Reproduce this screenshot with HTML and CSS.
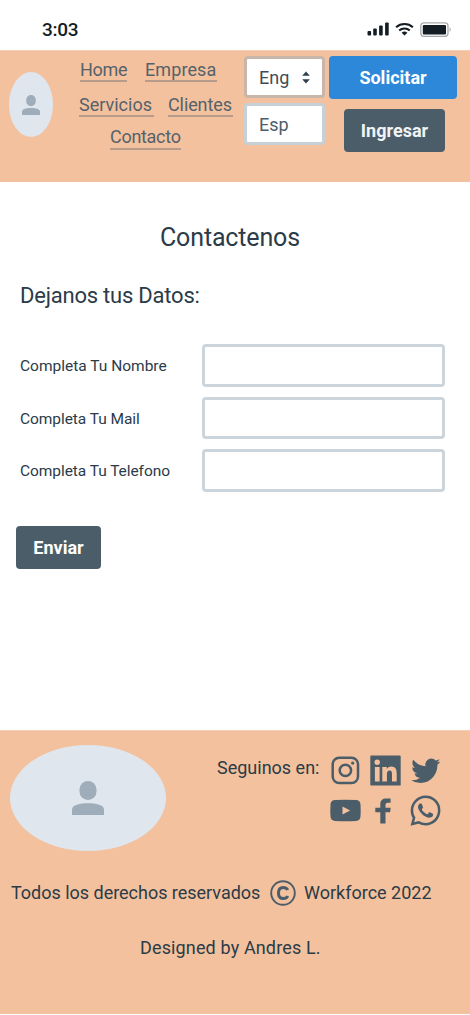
FILE: index.html
```html
<!DOCTYPE html>
<html lang="es">
<head>
<meta charset="utf-8">
<title>Contactenos</title>
<link rel="stylesheet" href="styles.css">
</head>
<body>
<div class="status">
  <span class="clock">3:03</span>
  <svg class="status-icons" viewBox="0 0 86 18" width="86" height="18">
    <g fill="#141c24">
      <rect x="0.500" y="10" width="3.6" height="4.6" rx="1"/>
      <rect x="6.2" y="7.6" width="3.6" height="7" rx="1"/>
      <rect x="12.1" y="4.6" width="3.6" height="10" rx="1"/>
      <rect x="18.1" y="1.5" width="3.6" height="13.1" rx="1"/>
      <path d="M37.500 14.400l-2.9-2.700a4.400 4.400 0 0 1 5.800 0z"/>
      <rect x="55.800" y="4" width="23.2" height="9.4" rx="1"/>
    </g>
    <g fill="none" stroke="#141c24" stroke-width="2.2">
      <path d="M29.100 6.200a12.600 12.600 0 0 1 16.800 0"/>
      <path d="M32.200 9.500a8 8 0 0 1 10.600 0"/>
    </g>
    <rect x="53.800" y="1.9" width="27.2" height="13.4" rx="3" fill="none" stroke="#a9a9ac" stroke-width="1.3"/>
    <path d="M82.600 6.200a3 3 0 0 1 0 4.800z" fill="#a9a9ac"/>
  </svg>
</div>

<header class="header">
  <div class="avatar avatar-small">
    <svg viewBox="0 0 32 34" preserveAspectRatio="none" width="18" height="20"><rect x="7.500" y="0" width="17" height="19" rx="8.500" ry="8.500"/><path d="M0 34v-5.500C0 24 8 22.300 16 22.300S32 24 32 28.500V34z"/></svg>
  </div>
  <nav class="nav">
    <div class="nav-row"><a class="link home">Home</a><a class="link empresa">Empresa</a></div>
    <div class="nav-row nav-mid"><a class="link servicios">Servicios</a><a class="link clientes">Clientes</a></div>
    <div class="nav-row nav-last"><a class="link contacto">Contacto</a></div>
  </nav>
  <div class="langs">
    <div class="lang lang-open"><span>Eng</span>
      <svg width="8" height="13" viewBox="0 0 8 13"><path d="M4 .8l3.300 3.700H.7zM4 12.200L.7 8.500h6.600z" fill="#2f3e4b" stroke="#2f3e4b" stroke-width=".5" stroke-linejoin="round"/></svg>
    </div>
    <div class="lang"><span>Esp</span></div>
  </div>
  <div class="actions">
    <button class="btn btn-blue">Solicitar</button>
    <button class="btn btn-login">Ingresar</button>
  </div>
</header>

<main class="main">
  <h1 class="title">Contactenos</h1>
  <h2 class="subtitle">Dejanos tus Datos:</h2>
  <form class="form">
    <label class="label nombre" for="nombre">Completa Tu Nombre</label><input class="input" id="nombre">
    <label class="label mail" for="mail">Completa Tu Mail</label><input class="input" id="mail">
    <label class="label telefono" for="telefono">Completa Tu Telefono</label><input class="input" id="telefono">
  </form>
  <button class="btn btn-send">Enviar</button>
</main>

<footer class="footer">
  <div class="footer-top">
    <div class="avatar avatar-large">
      <svg viewBox="0 0 32 34" preserveAspectRatio="none" width="32" height="34"><rect x="7.500" y="0" width="17" height="19" rx="8.500"/><path d="M0 34v-5.500C0 24 8 22.300 16 22.300S32 24 32 28.500V34z"/></svg>
    </div>
    <span class="follow">Seguinos en:</span>
    <div class="social">
      <svg viewBox="0 0 31 31"><g fill="none" stroke="#4c5d6a" stroke-width="2.500"><rect x="2.700" y="2.800" width="25.300" height="25.300" rx="6.500"/><circle cx="15.400" cy="15.400" r="5.700"/></g><circle cx="22.700" cy="8.100" r="1.700"/></svg>
      <svg viewBox="0 0 31 31"><path fill-rule="evenodd" d="M1.200.5h28.600q.9 0 .9.900v28.300q0 .9-.9.900H1.200q-.9 0-.9-.9V1.400q0-.9.900-.9zM4.900 11.900v14.600h4.700V11.900zM7.200 4.600a2.700 2.700 0 1 0 0 5.400 2.700 2.700 0 0 0 0-5.400zM12.300 11.900v14.600h4.600v-7.300c0-2 .6-3.800 2.800-3.800s2.300 2 2.300 3.900v7.200h4.700v-8.100c0-4-1-6.900-5.500-6.900-2.200 0-3.700 1.200-4.300 2.400h-.1v-2z"/></svg>
      <svg viewBox="0 0 31 31"><path transform="translate(1.200 .8) scale(1.215 1.250)" d="M23.953 4.570a10 10 0 0 1-2.825.775 4.958 4.958 0 0 0 2.163-2.723c-.951.555-2.005.959-3.127 1.184a4.920 4.920 0 0 0-8.384 4.482C7.690 8.095 4.067 6.130 1.640 3.162a4.822 4.822 0 0 0-.666 2.475c0 1.710.870 3.213 2.188 4.096a4.904 4.904 0 0 1-2.228-.616v.060a4.923 4.923 0 0 0 3.946 4.827 4.996 4.996 0 0 1-2.212.085 4.936 4.936 0 0 0 4.604 3.417 9.867 9.867 0 0 1-6.102 2.105c-.390 0-.779-.023-1.170-.067a13.995 13.995 0 0 0 7.557 2.209c9.053 0 13.998-7.496 13.998-13.985 0-.210 0-.420-.015-.630A9.935 9.935 0 0 0 23.953 4.570z"/></svg>
      <svg viewBox="0 0 31 31"><path fill-rule="evenodd" d="M5 5.100q10.500-.7 21 0 4.200.2 4.500 4.500.4 6 0 12-.3 4.200-4.500 4.400-10.500.6-21 0-4.200-.2-4.500-4.400-.4-6 0-12 .3-4.300 4.500-4.500zM12.500 11.500v8l7.600-4z"/></svg>
      <svg viewBox="0 0 31 31"><path d="M10.300 28.500V17.200H5.300v-4.400h5V9.600c0-4.200 2.300-6 6-6h4.300v4.200h-2.700c-1.900 0-2.400.9-2.400 2.400v2.600h5.200l-.6 4.400h-4.600v11.300z"/></svg>
      <svg viewBox="0 0 31 31"><path transform="translate(.5 .4) scale(1.250 1.265)" d="M17.472 14.382c-.297-.149-1.758-.867-2.030-.967-.273-.099-.471-.148-.670.150-.197.297-.767.966-.940 1.164-.173.199-.347.223-.644.075-.297-.150-1.255-.463-2.390-1.475-.883-.788-1.480-1.761-1.653-2.059-.173-.297-.018-.458.130-.606.134-.133.298-.347.446-.520.149-.174.198-.298.298-.497.099-.198.050-.371-.025-.520-.075-.149-.669-1.612-.916-2.207-.242-.579-.487-.500-.669-.510-.173-.008-.371-.010-.570-.010-.198 0-.520.074-.792.372-.272.297-1.040 1.016-1.040 2.479 0 1.462 1.065 2.875 1.213 3.074.149.198 2.096 3.200 5.077 4.487.709.306 1.262.489 1.694.625.712.227 1.360.195 1.871.118.571-.085 1.758-.719 2.006-1.413.248-.694.248-1.289.173-1.413-.074-.124-.272-.198-.570-.347m-5.421 7.403h-.004a9.870 9.870 0 0 1-5.031-1.378l-.361-.214-3.741.982.998-3.648-.235-.374a9.860 9.860 0 0 1-1.510-5.260c.001-5.450 4.436-9.884 9.888-9.884 2.640 0 5.122 1.030 6.988 2.898a9.825 9.825 0 0 1 2.893 6.994c-.003 5.450-4.437 9.884-9.885 9.884m8.413-18.297A11.815 11.815 0 0 0 12.050 0C5.495 0 .160 5.335.157 11.892c0 2.096.547 4.142 1.588 5.945L.057 24l6.305-1.654a11.882 11.882 0 0 0 5.683 1.448h.005c6.554 0 11.890-5.335 11.893-11.893a11.821 11.821 0 0 0-3.480-8.413z"/></svg>
    </div>
  </div>
  <div class="legal">
    <span class="rights">Todos los derechos reservados</span>
    <svg width="26" height="26" viewBox="0 0 26 26" fill="none" stroke="#4c5d6a"><circle cx="13" cy="13" r="11.800" stroke-width="1.900"/><path d="M17.700 10C17 8.300 15.400 7.400 13.200 7.400c-3.300 0-4.700 2.100-4.700 5.600s1.400 5.600 4.700 5.600c2.200 0 3.800-.9 4.500-2.600" stroke-width="3"/></svg>
    <span class="company">Workforce 2022</span>
  </div>
  <p class="credit">Designed by Andres L.</p>
</footer>
</body>
</html>
```

FILE: styles.css
```css
* { box-sizing: border-box; }

body {
  margin: 0;
  width: 470px;
  height: 1015px;
  overflow: hidden;
  background: #fff;
  color: #2b3b48;
  font-family: Roboto, "Liberation Sans", sans-serif;
}

svg { display: block; flex: none; }

.status {
  display: flex;
  justify-content: space-between;
  height: 50px;
  padding: 19px 17px 0 42px;
}
.clock {
  color: #141c24;
  font-size: 19px;
  font-weight: 500;
  letter-spacing: -0.3px;
  line-height: 21px;
}
.status-icons { margin-top: 2px; }

.header {
  display: flex;
  height: 132px;
  padding-left: 9px;
  background: #f3c19d;
  border-top: 1px solid #f6d0b5;
}

.avatar {
  display: flex;
  align-items: center;
  justify-content: center;
  flex: none;
  border-radius: 50%;
  background: #dfe6ed;
  fill: #9eadb9;
}
.avatar-small { width: 44px; height: 65px; margin-top: 21px; }
.avatar-large { width: 156px; height: 106px; }

.nav {
  display: flex;
  flex-direction: column;
  width: 156px;
  margin-left: 26px;
  padding-top: 9px;
}
.nav-row { display: flex; gap: 18px; padding-left: 1px; }
.nav-mid { gap: 14px; margin-top: 13px; padding-left: 0; }
.nav-last { margin-top: 11px; padding-left: 31px; }
.link {
  height: 22px;
  border-bottom: 2px solid #b79c8b;
  color: #56626b;
  font-size: 18px;
  line-height: 19px;
  white-space: nowrap;
}
.home { width: 47px; letter-spacing: -0.3px; }
.empresa { width: 72px; letter-spacing: 0.1px; }
.servicios { width: 75px; }
.clientes { width: 65px; letter-spacing: -0.1px; }
.contacto { width: 71px; letter-spacing: -0.3px; line-height: 18px; }

.langs {
  display: flex;
  flex-direction: column;
  gap: 5px;
  width: 81px;
  margin-left: 9px;
  padding-top: 5px;
}
.lang {
  display: flex;
  align-items: center;
  height: 42px;
  padding-left: 12px;
  background: #fff;
  border: 3px solid #c6d0d7;
  border-radius: 4px;
  color: #4c5d6a;
  font-size: 18px;
}
.lang-open {
  gap: 13px;
  border-color: #c8b6aa;
  color: #3f4d59;
}

.actions {
  display: flex;
  flex-direction: column;
  align-items: center;
  gap: 10px;
  width: 128px;
  margin-left: 4px;
  padding-top: 5px;
}
.btn {
  height: 43px;
  padding: 0;
  border: 0;
  border-radius: 4px;
  background: #4c5d6a;
  color: #fff;
  font: 700 18px/43px Roboto, sans-serif;
}
.btn-blue { width: 128px; background: #2d88d9; }
.btn-login { width: 101px; margin-left: 3px; color: #f1f3f4; }
.btn-send { width: 85px; margin: 34px 0 0 16px; }

.main { height: 548px; padding-top: 41px; }
.title {
  margin: 0;
  padding-left: 160px;
  font-size: 25px;
  font-weight: 400;
  letter-spacing: -0.15px;
  line-height: 30px;
}
.subtitle {
  margin: 28px 0 0;
  padding-left: 20px;
  font-size: 22px;
  font-weight: 400;
  letter-spacing: -0.22px;
  line-height: 30px;
}
.form {
  display: grid;
  grid-template-columns: 182px 243px;
  row-gap: 10px;
  align-items: center;
  margin: 33px 0 0 20px;
}
.label { padding-top: 2px; font-size: 15.5px; line-height: 40px; }
.mail, .telefono { letter-spacing: -0.06px; }
.input {
  width: 243px;
  height: 42.500px;
  border: 3px solid #ccd5dc;
  border-radius: 4px;
  background: #fff;
}

.footer {
  height: 284px;
  padding: 14px 0 0 10px;
  background: #f3c19d;
  border-top: 1px solid #f5cfb4;
  font-size: 18px;
}
.footer-top { display: flex; }
.follow {
  width: 113px;
  margin: 13px 0 0 51px;
  line-height: 20px;
  white-space: nowrap;
}
.social {
  display: grid;
  grid-template-columns: repeat(3, 31px);
  grid-template-rows: repeat(2, 31px);
  gap: 9px;
  margin-top: 10px;
  fill: #4c5d6a;
}
.legal {
  display: flex;
  align-items: center;
  height: 26px;
  margin-top: 29px;
  line-height: 26px;
  white-space: nowrap;
}
.rights { width: 260px; padding-left: 1px; letter-spacing: -0.02px; }
.company { margin-left: 8px; }
.credit { margin: 31px 0 0 130px; letter-spacing: 0.14px; line-height: 22px; }
```
